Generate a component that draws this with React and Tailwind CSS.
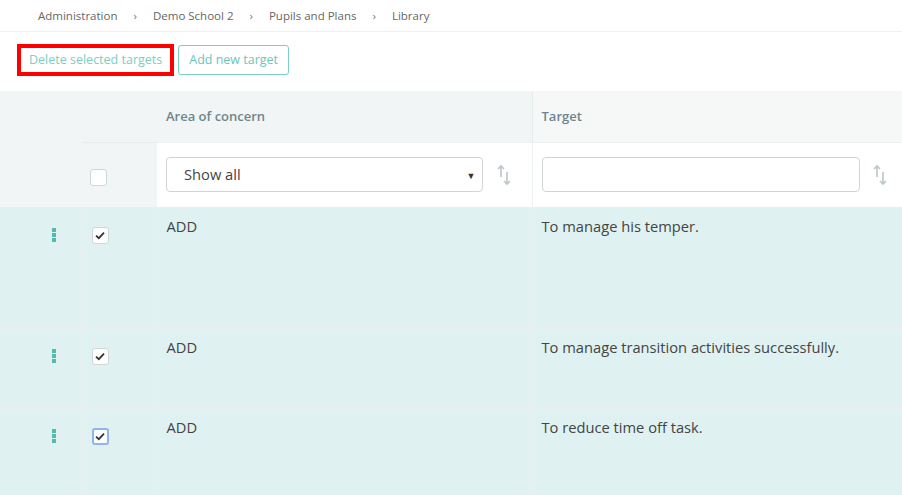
import React from 'react'

const rows = [
  { id: 1, area: 'ADD', target: 'To manage his temper.', h: 'h-[121px]', focus: false },
  { id: 2, area: 'ADD', target: 'To manage transition activities successfully.', h: 'h-[80px]', focus: false },
  { id: 3, area: 'ADD', target: 'To reduce time off task.', h: 'h-[88px]', focus: true },
]

const crumbs = ['Administration', 'Demo School 2', 'Pupils and Plans', 'Library']

function SortIcon() {
  return (
    <svg width="16" height="22" viewBox="0 0 16 22" fill="none" stroke="#b9c6ca" strokeWidth="1.6">
      <path d="M5 2 V13" />
      <path d="M2 5 L5 2 L8 5" />
      <path d="M11 8 V20" />
      <path d="M8 17 L11 20 L14 17" />
    </svg>
  )
}

function Check({ checked, focus }) {
  return (
    <div className={`w-[17px] h-[17px] rounded-[3px] bg-white flex items-center justify-center ${focus ? 'border-2 border-[#8fb4f0]' : 'border border-[#cfd6d8]'}`}>
      {checked && (
        <svg width="10" height="9" viewBox="0 0 10 9">
          <path d="M1 4.6 L3.8 7.2 L9 1.6" fill="none" stroke="#333" strokeWidth="1.8" />
        </svg>
      )}
    </div>
  )
}

function Dots() {
  return (
    <div className="flex flex-col gap-[1px]">
      <span className="w-[4px] h-[4px] bg-[#4fbcb2]" />
      <span className="w-[4px] h-[4px] bg-[#4fbcb2]" />
      <span className="w-[4px] h-[4px] bg-[#4fbcb2]" />
    </div>
  )
}

export default function App() {
  return (
    <div className="w-[902px] h-[495px] overflow-hidden bg-white font-['Open_Sans',sans-serif]">
      <div className="h-[32px] border-b border-[#eef1f2] flex items-center pl-[38px] text-[11.5px] text-[#666]">
        {crumbs.map((c, i) => (
          <React.Fragment key={c}>
            {i > 0 && <span className="px-[16px] text-[#777]">›</span>}
            <span>{c}</span>
          </React.Fragment>
        ))}
      </div>

      <div className="h-[59px] flex items-start pt-[12px] pl-[17px] gap-[4px]">
        <div className="border-[4px] border-[#ff0000] h-[32px] flex items-center px-[8px]">
          <span className="text-[12.5px] text-[#7ecdc4]">Delete selected targets</span>
        </div>
        <button className="mt-[1px] h-[30px] px-[10px] border border-[#7ccfc5] rounded-[3px] text-[12.5px] text-[#6cc5bb]">
          Add new target
        </button>
      </div>

      <table className="w-[902px] table-fixed border-collapse text-[14.7px] text-[#444]">
        <colgroup>
          <col className="w-[82px]" />
          <col className="w-[75px]" />
          <col className="w-[375px]" />
          <col className="w-[370px]" />
        </colgroup>
        <thead>
          <tr className="h-[51px]">
            <th rowSpan={2} className="bg-[#f1f5f5]" />
            <th className="bg-[#f1f5f5]" />
            <th className="bg-[#f1f5f5] text-left font-semibold text-[13px] text-[#6f858d] pl-[9px]">Area of concern</th>
            <th className="bg-[#f6f8f8] border-l border-[#e6ecec] text-left font-semibold text-[13px] text-[#6f858d] pl-[9px]">Target</th>
          </tr>
          <tr className="h-[65px]">
            <th className="bg-[#f1f5f5] border-t border-[#e6ecec] pl-[8px]">
              <div className="mt-[6px]"><Check checked={false} /></div>
            </th>
            <th className="bg-white border-t border-[#eef1f2] pl-[9px] pr-[20px]">
              <div className="flex items-center gap-[13px]">
                <div className="relative flex-1 h-[35px] border border-[#cfd4d6] rounded-[4px] flex items-center pl-[17px] font-normal text-[14.7px] text-[#444]">
                  Show all
                  <span className="absolute right-[6px] top-[11px] text-[9px] text-[#333]">▼</span>
                </div>
                <SortIcon />
              </div>
            </th>
            <th className="bg-white border-t border-l border-[#eef1f2] pl-[9px] pr-[14px]">
              <div className="flex items-center gap-[12px]">
                <div className="flex-1 h-[35px] border border-[#cfd4d6] rounded-[4px]" />
                <SortIcon />
              </div>
            </th>
          </tr>
        </thead>
        <tbody>
          {rows.map(r => (
            <tr key={r.id} className={`${r.h} bg-[#dff2f1] border-t border-[#e9eeee] align-top`}>
              <td className="pt-[20px]">
                <div className="flex justify-end pr-[26px]"><Dots /></div>
              </td>
              <td className="border-l border-[#e9eeee] pt-[19px] pl-[9px]">
                <Check checked focus={r.focus} />
              </td>
              <td className="border-l border-[#e9eeee] pt-[8px] pl-[9px] leading-[20px]">{r.area}</td>
              <td className="border-l border-[#e9eeee] pt-[8px] pl-[9px] leading-[20px]">{r.target}</td>
            </tr>
          ))}
        </tbody>
      </table>
    </div>
  )
}
